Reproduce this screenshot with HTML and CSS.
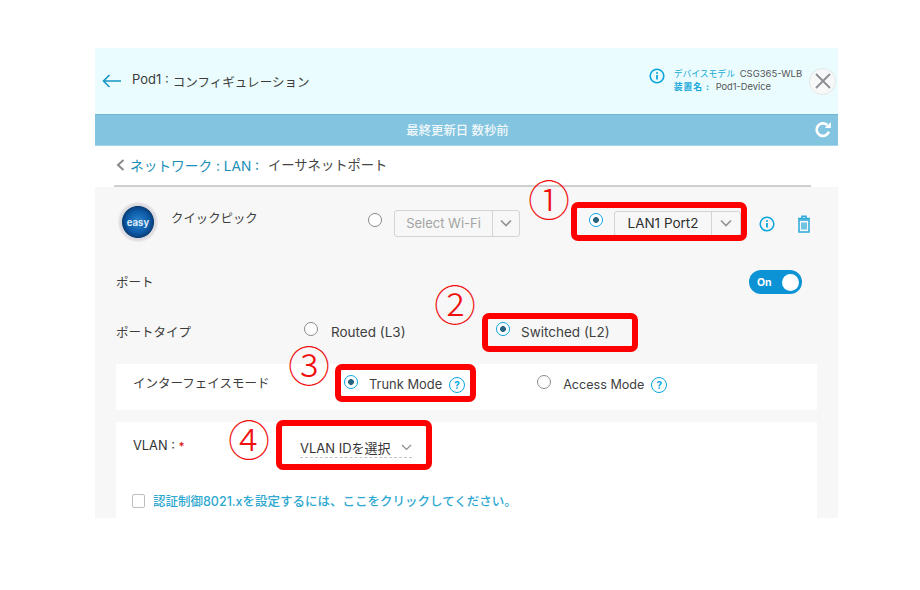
FILE: index.html
```html
<!DOCTYPE html>
<html lang="ja">
<head>
<meta charset="utf-8">
<title>Pod1 コンフィギュレーション</title>
<link rel="stylesheet" href="styles.css">
</head>
<body>
<div class="stage">
  <div class="app">
    <header class="head">
      <svg class="back" width="20" height="14" viewBox="0 0 20 14"><path d="M19 7H1.500M7.500 1 1.500 7l6 6" fill="none" stroke="#1597c4" stroke-width="1.600"/></svg>
      <div class="title"><span>Pod1 :</span> <span class="title-ja">コンフィギュレーション</span></div>
      <svg class="info-top" width="16" height="16" viewBox="0 0 16 16"><circle cx="8" cy="8" r="6.800" fill="none" stroke="#0aa5dc" stroke-width="1.600"/><circle cx="8" cy="4.900" r="1" fill="#0aa5dc"/><path d="M8 7v4.600" stroke="#0aa5dc" stroke-width="1.800"/></svg>
      <div class="device">
        <div class="device-line"><span class="device-key">デバイスモデル</span><span class="device-val">CSG365-WLB</span></div>
        <div class="device-line"><span class="device-key wide">装置名 :</span><span class="device-val">Pod1-Device</span></div>
      </div>
      <div class="close"><svg width="18" height="18" viewBox="0 0 18 18"><path d="M2 2l14 14M16 2 2 16" stroke="#8c9094" stroke-width="1.900"/></svg></div>
    </header>
    <div class="bar">
      <span class="bar-text">最終更新日 数秒前</span>
      <svg class="refresh" width="18" height="18" viewBox="0 0 16 16"><path d="M13.200 9.600A5.600 5.600 0 1 1 11.800 3.600" fill="none" stroke="#fff" stroke-width="2.400"/><path d="M9.600 6.200H15V.8z" fill="#fff"/></svg>
    </div>
    <nav class="crumb">
      <svg width="9" height="12" viewBox="0 0 9 12"><path d="M7.500 1 2 6l5.500 5" fill="none" stroke="#8a8a8a" stroke-width="2"/></svg>
      <span class="crumb-link">ネットワーク : LAN :</span>
      <span class="crumb-cur">イーサネットポート</span>
    </nav>
    <main class="content">
      <div class="quick">
        <div class="logo"><span>easy</span></div>
        <span class="quick-label">クイックピック</span>
        <span class="radio"></span>
        <div class="select muted"><span class="select-text">Select Wi-Fi</span><span class="select-btn"><svg width="12" height="8" viewBox="0 0 12 8"><path d="M1 1.500l5 5 5-5" fill="none" stroke="#8e9296" stroke-width="1.600"/></svg></span></div>
        <span class="radio on r-lan"></span>
        <div class="select lan"><span class="select-text">LAN1 Port2</span><span class="select-btn"><svg width="12" height="8" viewBox="0 0 12 8"><path d="M1 1.500l5 5 5-5" fill="none" stroke="#8e9296" stroke-width="1.600"/></svg></span></div>
        <svg class="i-info" width="16" height="16" viewBox="0 0 16 16"><circle cx="8" cy="8" r="6.800" fill="none" stroke="#0aa5dc" stroke-width="1.500"/><circle cx="8" cy="4.900" r="1" fill="#0aa5dc"/><path d="M8 7v4.600" stroke="#0aa5dc" stroke-width="1.800"/></svg>
        <svg class="i-trash" width="14" height="18" viewBox="0 0 14 18"><path d="M1 3.500h12M5 3V1.200h4V3" fill="none" stroke="#2aa8d8" stroke-width="1.500"/><rect x="2" y="5" width="10" height="12" fill="none" stroke="#2aa8d8" stroke-width="1.500"/><path d="M5 7.500v7M7 7.500v7M9 7.500v7" stroke="#2aa8d8" stroke-width="1.300"/></svg>
      </div>
      <div class="row port">
        <span class="row-label">ポート</span>
        <div class="toggle"><span>On</span><i></i></div>
      </div>
      <div class="row type">
        <span class="row-label type-label">ポートタイプ</span>
        <span class="radio"></span><span class="opt routed">Routed (L3)</span>
        <span class="radio on r-sw"></span><span class="opt switched">Switched (L2)</span>
      </div>
      <div class="panel mode">
        <span class="mode-label">インターフェイスモード</span>
        <span class="radio on"></span><span class="opt trunk">Trunk Mode</span>
        <span class="help">?</span>
        <span class="radio r-access"></span><span class="opt access">Access Mode</span>
        <span class="help">?</span>
      </div>
      <div class="panel vlan">
        <div class="vlan-row">
          <span class="vlan-label">VLAN : <b>*</b></span>
          <div class="vlan-select"><span>VLAN IDを選択</span><svg width="11" height="7" viewBox="0 0 11 7"><path d="M1 1l4.500 4.500L10 1" fill="none" stroke="#8a8a8a" stroke-width="1.100"/></svg></div>
        </div>
        <label class="check"><span class="box"></span><span class="check-text">認証制御8021.xを設定するには、ここをクリックしてください。</span></label>
      </div>
    </main>
  </div>
  <div class="mark m1"></div>
  <div class="mark m2"></div>
  <div class="mark m3"></div>
  <div class="mark m4"></div>
  <span class="num n1">①</span>
  <span class="num n2">②</span>
  <span class="num n3">③</span>
  <span class="num n4">④</span>
</div>
</body>
</html>
```
FILE: styles.css
```css
* { box-sizing: border-box; }
html, body { margin: 0; padding: 0; background: #fff; }
body {
  width: 920px;
  height: 590px;
  overflow: hidden;
  font-family: "Inter", "Noto Sans CJK JP", sans-serif;
  color: #3c3c3c;
}
.stage { position: relative; width: 920px; height: 590px; padding: 48px 0 0 95px; }
.app { width: 743px; height: 470px; display: flex; flex-direction: column; overflow: hidden; }

.head { height: 66px; flex: none; background: #ebfcff; display: flex; align-items: center; padding: 0 2px 0 7px; }
.back { flex: none; }
.title { margin-left: 10px; font-size: 13px; white-space: nowrap; display: flex; gap: 4px; align-items: center; position: relative; top: -2px; }
.title-ja { font-size: 12.500px; position: relative; top: 2px; letter-spacing: .05px; }
.info-top { margin-left: 339px; flex: none; position: relative; top: -5px; }
.device { margin-left: 9px; width: 136px; position: relative; top: -1px; }
.device-line { display: flex; line-height: 13px; white-space: nowrap; }
.device-key { color: #15a8d8; width: 66px; flex: none; font-size: 8.800px; }
.device-key.wide { width: 42px; font-weight: 700; letter-spacing: 1px; }
.device-val { font-size: 9.500px; color: #555; }
.device-line + .device-line .device-val { font-size: 9.300px; }
.close { width: 27px; height: 27px; border-radius: 50%; border: 1px solid #e2e6e6; background: #f7f9f9; display: flex; align-items: center; justify-content: center; margin-left: 1px; flex: none; }

.bar { height: 32px; flex: none; background: #83c4e0; border-top: 1px solid #6fb5d4; border-bottom: 1px solid #a5d6ea; display: flex; align-items: center; justify-content: center; position: relative; }
.bar-text { color: #f0f8fb; font-size: 12.400px; position: relative; left: -9px; font-weight: 500; }
.refresh { position: absolute; right: 6px; top: 6px; }

.crumb { height: 41px; flex: none; margin: 0 27px 0 19px; border-bottom: 2px solid #cfcfcf; display: flex; align-items: center; padding: 0 0 2px 2px; white-space: nowrap; }
.crumb-link { color: #1a8fb8; margin-left: 5px; width: 138px; font-size: 13.700px; }
.crumb-cur { color: #444; font-size: 13.300px; }

.content { flex: 1; background: #f7f7f7; padding: 15px 21px 0; display: flex; flex-direction: column; }
.quick { display: flex; align-items: center; height: 40px; padding-left: 2px; }
.logo { width: 40px; height: 40px; flex: none; border-radius: 50%; background: radial-gradient(circle closest-side at 50% 50%, #2e86cf 0, #0d5ba8 55%, #0a3f78 78%, #d5d5da 82%, #ececef 100%); display: flex; align-items: center; justify-content: center; }
.logo span { color: #dfeaf6; font-size: 9.500px; font-weight: 700; }
.quick-label { font-size: 12.400px; width: 197px; margin-left: 13px; flex: none; position: relative; top: -4px; }
.radio { width: 14px; height: 14px; border-radius: 50%; border: 1.500px solid #8a8a8a; background: #fff; flex: none; position: relative; top: -2px; }
.radio.on { border-color: #0aa5e0; background: radial-gradient(circle, #27627f 0 2.600px, #fff 3.200px); }
.select { display: flex; height: 27px; border: 1.500px solid #d4d4d4; border-radius: 3px; background: #f7f7f7; align-items: center; flex: none; }
.select-text { flex: 1; font-size: 13px; text-align: center; white-space: nowrap; }
.select-btn { width: 27px; align-self: stretch; border-left: 1.500px solid #d4d4d4; display: flex; align-items: center; justify-content: center; }
.muted { width: 126px; margin-left: 12px; color: #a4a4a4; position: relative; top: 1px; }
.r-lan { margin-left: 69px; }
.lan { width: 127px; height: 25px; margin-left: 11px; color: #2f2f2f; border-top-width: 1px; position: relative; top: 1px; }
.lan .select-text { font-size: 13.500px; }
.lan .select-btn { width: 29px; }
.i-info { margin-left: 18px; flex: none; position: relative; top: 2px; }
.i-trash { margin-left: 22px; flex: none; position: relative; top: 2px; }

.row { display: flex; align-items: center; height: 24px; }
.row-label { font-size: 12.500px; position: relative; }
.port { margin-top: 28px; justify-content: space-between; padding-right: 15px; }
.port .row-label { top: -1px; }
.toggle { width: 53px; height: 24px; border-radius: 12px; background: #0b93d6; display: flex; align-items: center; justify-content: space-between; padding: 0 3px 0 8px; }
.toggle span { color: #fff; font-size: 10.500px; font-weight: 700; }
.toggle i { width: 17px; height: 17px; border-radius: 50%; background: #fff; }
.type { margin-top: 25px; }
.type-label { width: 188px; flex: none; }
.opt { font-size: 13.500px; color: #3f3f3f; white-space: nowrap; position: relative; top: 1px; }
.routed { width: 178px; flex: none; padding-left: 13px; }
.switched { margin-left: 11px; }

.panel { background: #fff; }
.mode { margin-top: 21px; height: 46px; flex: none; padding-left: 17px; display: flex; align-items: center; }
.mode-label { font-size: 12.500px; width: 211px; flex: none; position: relative; top: -5px; }
.mode .radio { top: -5px; }
.mode .opt { margin-left: 11px; font-size: 12.900px; top: -3px; }
.mode .access { margin-left: 12px; font-size: 12.600px; }
.help { width: 16px; height: 16px; border-radius: 50%; border: 1.500px solid #0aa5e0; color: #0aa5e0; font-size: 10px; font-weight: 700; display: flex; align-items: center; justify-content: center; margin-left: 7px; flex: none; position: relative; top: -2px; }
.mode .radio.r-access { margin-left: 72px; }
.vlan { margin-top: 12px; height: 96px; flex: none; padding: 15px 0 0 16px; }
.vlan-row { display: flex; align-items: flex-start; height: 35px; }
.vlan-label { font-size: 12.800px; width: 167px; margin-left: 1px; flex: none; line-height: 18px; color: #333; }
.vlan-label b { color: #e02020; font-size: 11px; }
.vlan-select { width: 112px; height: 21px; border-bottom: 1.500px dashed #c4c4c4; display: flex; justify-content: space-between; align-items: center; font-size: 13px; color: #333; white-space: nowrap; }
.check { display: flex; align-items: center; margin-top: 19px; }
.box { width: 13px; height: 14px; border: 1.500px solid #bdbdbd; border-radius: 2px; flex: none; background: #fff; }
.check-text { margin-left: 8px; color: #2ea8d0; font-size: 12.500px; white-space: nowrap; font-weight: 500; }

.mark { position: absolute; border: 6px solid #ff0000; border-radius: 7px; }
.m1 { left: 571px; top: 202px; width: 176px; height: 39px; }
.m2 { left: 482px; top: 313px; width: 156px; height: 39px; }
.m3 { left: 335px; top: 364px; width: 141px; height: 38px; }
.m4 { left: 276px; top: 420px; width: 156px; height: 50px; }
.num { position: absolute; width: 40px; height: 40px; display: flex; align-items: center; justify-content: center; font-family: "Noto Sans CJK JP", sans-serif; font-size: 42px; font-weight: 300; line-height: 40px; color: #f01010; }
.n1 { left: 529px; top: 178px; }
.n2 { left: 435px; top: 283px; }
.n3 { left: 289px; top: 344px; }
.n4 { left: 229px; top: 418px; }
```
